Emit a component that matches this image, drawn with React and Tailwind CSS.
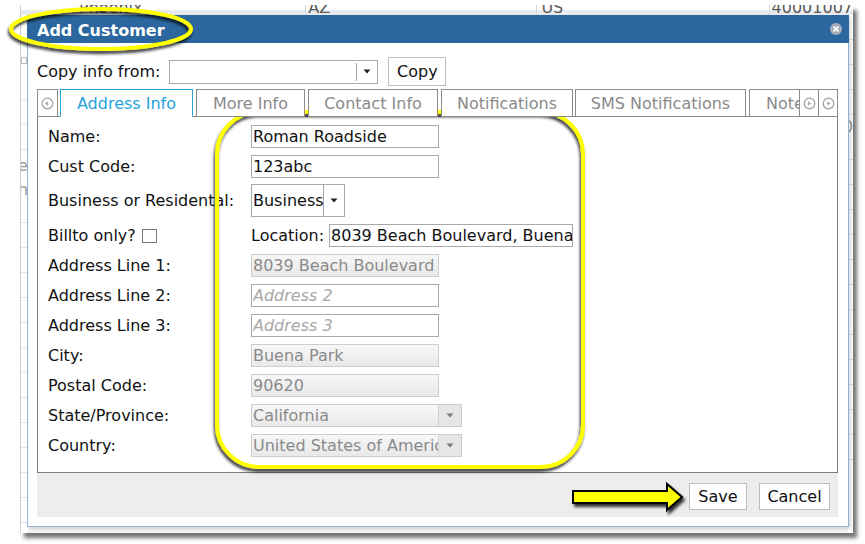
import React from "react";

const font = "font-['DejaVu_Sans','Verdana',sans-serif]";

/* small circled arrow used by the tab scroller */
function CircleArrow({ dir }) {
  const tri = {
    left: "M6.8 4.2 L4 6.5 L6.8 8.8 Z",
    right: "M5.2 4.2 L8 6.5 L5.2 8.8 Z",
    down: "M4.2 5.4 L8.8 5.4 L6.5 8.2 Z",
  }[dir];
  return (
    <svg width="13" height="13" viewBox="0 0 13 13">
      <circle cx="6.5" cy="6.5" r="5.3" fill="none" stroke="#a0a0a0" strokeWidth="1.2" />
      <path d={tri} fill="#a0a0a0" />
    </svg>
  );
}

function Caret({ color = "#222" }) {
  return (
    <svg width="8" height="5" viewBox="0 0 8 5">
      <path d="M0.5 0.5 L7.5 0.5 L4 4.5 Z" fill={color} />
    </svg>
  );
}

const Label = ({ children }) => (
  <div className="w-[203px] shrink-0 text-[16px] text-[#111] leading-none">{children}</div>
);

const Disabled = ({ children, w = "w-[188px]" }) => (
  <div className={`${w} h-[23px] border border-[#cdcdcd] bg-gradient-to-b from-[#f7f7f7] to-[#e9e9e9] text-[#8a8a8a] text-[16px] leading-[21px] pl-[1px] overflow-hidden whitespace-nowrap`}>
    {children}
  </div>
);

const Text = ({ value, placeholder, w = "w-[188px]" }) => (
  <input
    readOnly
    value={value}
    placeholder={placeholder}
    className={`${w} h-[23px] border border-[#a9a9a9] bg-white text-[16px] text-[#111] pl-[1px] outline-none placeholder:italic placeholder:text-[#a8a8a8]`}
  />
);

const DisabledSelect = ({ children }) => (
  <div className="w-[211px] h-[23px] border border-[#cdcdcd] bg-gradient-to-b from-[#f7f7f7] to-[#e9e9e9] flex">
    <div className="flex-1 text-[#8a8a8a] text-[16px] leading-[21px] pl-[1px] overflow-hidden whitespace-nowrap">{children}</div>
    <div className="w-[23px] border-l border-[#d4d4d4] bg-[#e6e6e6] flex items-center justify-center">
      <Caret color="#7a7a7a" />
    </div>
  </div>
);

function Tab({ w, active, children }) {
  return (
    <div
      className={`${w} h-[28px] pt-[2px] shrink-0 border flex items-center justify-center text-[16px] leading-none whitespace-nowrap overflow-hidden bg-white ${
        active ? "border-[#2aa3d6] border-b-white text-[#1fa3dc]" : "border-[#8c8c8c] text-[#8a8a8a]"
      }`}
    >
      {children}
    </div>
  );
}

export default function App() {
  const rows = Array.from({ length: 18 }, (_, i) => 100 + i * 25);

  return (
    <div className={`relative w-[865px] h-[544px] bg-white overflow-hidden ${font}`}>
      {/* screenshot frame with the customer table behind the dialog */}
      <div className="relative mt-[5px] ml-[20px] w-[833px] h-[528px] bg-[#f4f4f4] border-l border-[#cfcfcf] shadow-[4px_5px_4px_rgba(0,0,0,0.55)]">
        <div className="h-[10px] bg-[linear-gradient(#ffffff_5px,#e8eaee_5px)] overflow-hidden flex text-[16px] text-[#5a5a5a] leading-none">
          <div className="w-[286px] pl-[58px] -mt-[5px] border-r border-[#d6d6d6]">Phoenix</div>
          <div className="w-[232px] pl-[2px] -mt-[5px] border-r border-[#d6d6d6]">AZ</div>
          <div className="w-[233px] pl-[4px] -mt-[5px] border-r border-[#d6d6d6]">US</div>
          <div className="pl-[2px] -mt-[5px]">40001007</div>
        </div>
        {/* faint grid rows peeking out beside the dialog */}
        <div className="flex justify-between h-[518px]">
          <div className="w-[7px] bg-white flex flex-col text-[16px] text-[#9a9a9a] leading-none overflow-hidden">
            <div className="mt-[42px] w-[6px] h-[7px] border border-[#bbb]" />
            <div className="mt-[35px] border-t border-[#e2e2e2]" />
            <div className="mt-[24px] border-t border-[#e2e2e2]" />
            <div className="mt-[24px] border-t border-[#e2e2e2]" />
            <div className="mt-[8px] -ml-[3px]">e</div>
            <div className="mt-[8px] -ml-[3px]">h</div>
            {rows.slice(5).map((r) => (
              <div key={r} className="mt-[24px] border-t border-[#e2e2e2]" />
            ))}
          </div>
          <div className="w-[5px] bg-white flex flex-col text-[16px] text-[#9a9a9a] leading-none overflow-hidden">
            {rows.slice(0, 4).map((r) => (
              <div key={r} className="mt-[24px] border-t border-[#e2e2e2]" />
            ))}
            <div className="mt-[4px] -ml-[5px]">0</div>
            {rows.slice(5).map((r) => (
              <div key={r} className="mt-[24px] border-t border-[#e2e2e2]" />
            ))}
          </div>
        </div>

        {/* dialog window */}
        <div className="absolute left-[6px] top-[10px] w-[822px] shadow-[2px_2px_3px_rgba(0,0,0,0.15)]">
          <div className="h-[28px] bg-[#2b679e] flex items-center justify-between pl-[10px] pr-[7px]">
            <span className="text-white font-bold text-[16px] leading-none pt-[3px]">Add Customer</span>
            <span className="w-[12px] h-[12px] rounded-full bg-[#a3acb8] flex items-center justify-center">
              <svg width="6" height="6" viewBox="0 0 6 6">
                <path d="M0.5 0.5 L5.5 5.5 M5.5 0.5 L0.5 5.5" stroke="white" strokeWidth="1.6" />
              </svg>
            </span>
          </div>

          <div className="bg-white border-x border-b border-[#8fb2d8] pl-[9px] pr-[10px] pb-[9px]">
            {/* copy row */}
            <div className="pt-[14px] h-[43px] flex items-center">
              <span className="text-[16px] text-[#111] leading-none">Copy info from:</span>
              <div className="ml-[9px] w-[209px] h-[24px] border border-[#a9a9a9] flex">
                <div className="flex-1" />
                <div className="w-[21px] my-[2px] border-l border-[#a9a9a9] flex items-center justify-center">
                  <Caret />
                </div>
              </div>
              <div className="ml-[10px] w-[58px] h-[29px] border border-[#bdbdbd] flex items-center justify-center text-[16px] text-[#111] leading-none">
                Copy
              </div>
            </div>

            {/* tabs */}
            <div className="mt-[3px] h-[27px] flex items-start relative z-10">
              <div className="w-[21px] h-[28px] border border-[#8c8c8c] bg-white flex items-center justify-center">
                <CircleArrow dir="left" />
              </div>
              <div className="ml-[2px]"><Tab w="w-[133px]" active>Address Info</Tab></div>
              <div className="ml-[3px]"><Tab w="w-[109px]">More Info</Tab></div>
              <div className="ml-[3px]"><Tab w="w-[130px]">Contact Info</Tab></div>
              <div className="ml-[3px]"><Tab w="w-[132px]">Notifications</Tab></div>
              <div className="ml-[2px]"><Tab w="w-[171px]">SMS Notifications</Tab></div>
              <div className="ml-[3px] w-[50px] h-[28px] border border-r-0 border-[#8c8c8c] bg-white text-[16px] text-[#8a8a8a] leading-[28px] pl-[16px] overflow-hidden whitespace-nowrap">
                Notes
              </div>
              <div className="w-[20px] h-[28px] border border-[#8c8c8c] bg-white flex items-center justify-center">
                <CircleArrow dir="right" />
              </div>
              <div className="w-[19px] h-[28px] border border-l-0 border-[#8c8c8c] bg-white flex items-center justify-center">
                <CircleArrow dir="down" />
              </div>
            </div>

            {/* address panel */}
            <div className="h-[357px] border border-[#7c7c7c] pt-[8px] pl-[10px] flex flex-col gap-[7px]">
              <div className="flex items-center h-[23px]">
                <Label>Name:</Label>
                <Text value="Roman Roadside" />
              </div>
              <div className="flex items-center h-[23px]">
                <Label>Cust Code:</Label>
                <Text value="123abc" />
              </div>
              <div className="flex items-center h-[33px] -mt-px">
                <Label>Business or Residental:</Label>
                <div className="w-[94px] h-[33px] border border-[#a9a9a9] flex">
                  <div className="w-[71px] text-[16px] text-[#111] leading-[31px] pl-[1px] overflow-hidden whitespace-nowrap">Business</div>
                  <div className="flex-1 border-l border-[#a9a9a9] flex items-center justify-center">
                    <Caret />
                  </div>
                </div>
              </div>
              <div className="flex items-center h-[23px]">
                <div className="w-[203px] shrink-0 flex items-center text-[16px] text-[#111] leading-none">
                  Billto only?
                  <span className="ml-[6px] w-[15px] h-[14px] border border-[#7a7a7a] bg-white" />
                </div>
                <span className="text-[16px] text-[#111] leading-none">Location:</span>
                <div className="ml-[5px]">
                  <Text value="8039 Beach Boulevard, Buena Park, CA" w="w-[244px]" />
                </div>
              </div>
              <div className="flex items-center h-[23px]">
                <Label>Address Line 1:</Label>
                <Disabled>8039 Beach Boulevard</Disabled>
              </div>
              <div className="flex items-center h-[23px]">
                <Label>Address Line 2:</Label>
                <Text value="" placeholder="Address 2" />
              </div>
              <div className="flex items-center h-[23px]">
                <Label>Address Line 3:</Label>
                <Text value="" placeholder="Address 3" />
              </div>
              <div className="flex items-center h-[23px]">
                <Label>City:</Label>
                <Disabled>Buena Park</Disabled>
              </div>
              <div className="flex items-center h-[23px]">
                <Label>Postal Code:</Label>
                <Disabled>90620</Disabled>
              </div>
              <div className="flex items-center h-[23px]">
                <Label>State/Province:</Label>
                <DisabledSelect>California</DisabledSelect>
              </div>
              <div className="flex items-center h-[23px]">
                <Label>Country:</Label>
                <DisabledSelect>United States of America</DisabledSelect>
              </div>
            </div>

            {/* footer */}
            <div className="h-[44px] bg-[#ededed] flex items-start justify-end pt-[10px] pr-[8px] gap-[12px]">
              <div className="w-[58px] h-[27px] border border-[#bdbdbd] bg-white flex items-center justify-center text-[16px] text-[#111] leading-none">
                Save
              </div>
              <div className="w-[71px] h-[27px] border border-[#bdbdbd] bg-white flex items-center justify-center text-[16px] text-[#111] leading-none">
                Cancel
              </div>
            </div>
          </div>
        </div>
      </div>

      {/* yellow callouts drawn over the screenshot */}
      <svg className="absolute left-0 top-0 pointer-events-none" width="865" height="544" viewBox="0 0 865 544">
        <defs>
          <filter id="sh" x="-20%" y="-20%" width="140%" height="140%">
            <feDropShadow dx="-1" dy="3" stdDeviation="1.6" floodColor="#000" floodOpacity="0.8" />
          </filter>
          <filter id="sh2" x="-20%" y="-30%" width="140%" height="160%">
            <feDropShadow dx="2" dy="3" stdDeviation="1.6" floodColor="#000" floodOpacity="0.8" />
          </filter>
        </defs>
        <ellipse cx="101" cy="29" rx="90" ry="20" fill="none" stroke="#ffff00" strokeWidth="4" filter="url(#sh)" />
        <rect x="217" y="112" width="366" height="355" rx="42" fill="none" stroke="#ffff00" strokeWidth="4" filter="url(#sh)" />
        <path
          d="M573 491 L667 491 L667 484 L682 497 L667 510 L667 503 L573 503 Z"
          fill="#ffff00"
          stroke="#000"
          strokeWidth="2"
          strokeLinejoin="miter"
          filter="url(#sh2)"
        />
      </svg>
    </div>
  );
}
